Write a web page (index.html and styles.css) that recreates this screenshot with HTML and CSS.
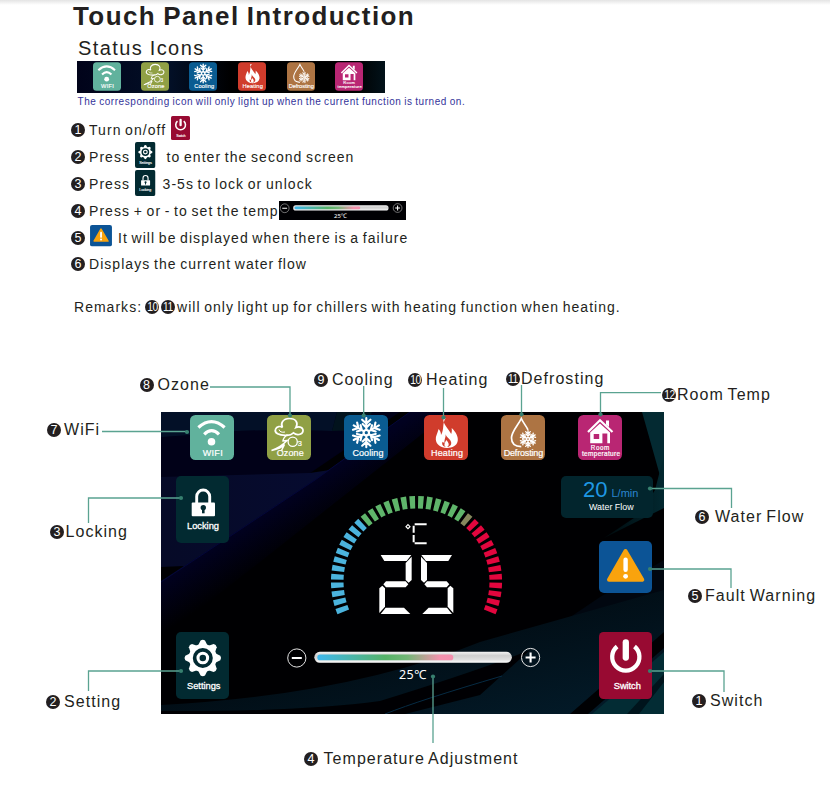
FILE: index.html
```html
<!DOCTYPE html>
<html lang="en">
<head>
<meta charset="utf-8">
<title>Touch Panel Introduction</title>
<link rel="stylesheet" href="styles.css">
</head>
<body>
<svg class="defs" aria-hidden="true">
  <defs>
    <linearGradient id="temp-fill" x1="0" x2="1" y1="0" y2="0">
      <stop offset="0" stop-color="#3fb8ee"/><stop offset=".5" stop-color="#55b368"/><stop offset=".66" stop-color="#72b776"/><stop offset=".9" stop-color="#f492ad"/><stop offset="1" stop-color="#f58fae"/>
    </linearGradient>
    <linearGradient id="track" x1="0" x2="0" y1="0" y2="1">
      <stop offset="0" stop-color="#f4f4f4"/><stop offset=".35" stop-color="#cfcfcf"/><stop offset=".7" stop-color="#dedede"/><stop offset="1" stop-color="#fff"/>
    </linearGradient>
    <g id="flake" fill="none" stroke="#fff" stroke-linecap="round">
      <g id="arm"><path d="M0 -3V-14M-4 -12.5L0 -8.8L4 -12.5M-3.5 -8.4L0 -5L3.5 -8.4"/></g>
      <use href="#arm" transform="rotate(60)"/><use href="#arm" transform="rotate(120)"/><use href="#arm" transform="rotate(180)"/><use href="#arm" transform="rotate(240)"/><use href="#arm" transform="rotate(300)"/>
      <circle r="2.6"/>
    </g>
    <symbol id="wifi" viewBox="0 0 44 45">
      <rect width="44" height="45" rx="5.5" fill="#61b29d"/>
      <g fill="none" stroke="#fff" stroke-width="3.2"><path d="M8.4 12.5Q21.5 .6 34.6 12.5"/><path d="M14.2 19.3Q21.6 12 29 19.3"/></g>
      <circle cx="21.5" cy="26.7" r="3.8" fill="#fff"/>
      <text x="12.7" y="41" textLength="20" class="tile-text">WIFI</text>
    </symbol>
    <symbol id="ozone" viewBox="0 0 44 45">
      <rect width="44" height="45" rx="5.5" fill="#90a045"/>
      <path d="M19 20.300C12 20.500 7 18 8.500 14.300C9.700 11 13.500 11 15.500 12.500C13 8.500 16 3.500 22.300 3.500C29 3.500 31.500 8 29 12.500C33 10.800 36.500 13 36 16.200C35.400 20 29.500 20.700 26.500 17.900C24.500 19.800 22 20.500 19 20.300" fill="none" stroke="#fff" stroke-width="1.700"/>
      <path d="M12 14.500Q13 18 18 17" fill="none" stroke="#fff" stroke-width="1"/>
      <path d="M20.500 19.500Q16 23 16 26L20 25.500Q14 32 4.500 35.500Q14 33.500 17.500 29.500L14.500 35.500" fill="none" stroke="#fff" stroke-width="1.500"/>
      <circle cx="25.700" cy="26.800" r="4.600" fill="none" stroke="#fff" stroke-width="1.300"/>
      <text x="30.700" y="31" font-size="7.500" fill="#fff" stroke="#fff" stroke-width=".2">3</text>
      <text x="9.700" y="40.800" textLength="27" class="tile-text">Ozone</text>
    </symbol>
    <symbol id="cooling" viewBox="0 0 44 45">
      <rect width="44" height="45" rx="5.500" fill="#0a5c91"/>
      <g transform="translate(22.300 17.700) scale(1.040)" stroke-width="2.050"><use href="#flake"/></g>
      <text x="8.400" y="41" textLength="31" class="tile-text">Cooling</text>
    </symbol>
    <symbol id="heating" viewBox="0 0 44 45">
      <rect width="44" height="45" rx="5.500" fill="#d03c2c"/>
      <path d="M19.500 3C18 8 24.500 14 27.200 19C28.200 16 27.700 14.500 27.700 13C32 17 34.500 22 33.700 26C32.700 31 28.500 32.700 23 33C16.500 32.700 12.200 29.500 11.800 24.500C11.500 21 13.500 18.500 14.600 14C16.500 16 17 18 17 20C20.500 14.500 18 9 21.500 3Z" fill="#fff"/>
      <path d="M21.500 19C22 22 27 24.500 27.200 27.500C27.500 30.300 25.400 32 22.700 32C19 32 17.300 29.500 18.600 26.800L20.500 28.300C20 24.500 22.200 22 21.500 19Z" fill="#d03c2c"/>
      <path d="M22.300 25C25.500 28.500 25.500 31 22.500 32.300C19.300 31.300 20.300 28.500 22.300 25Z" fill="#fff"/>
      <text x="7" y="41" textLength="32" class="tile-text">Heating</text>
    </symbol>
    <symbol id="defrosting" viewBox="0 0 44 45">
      <rect width="44" height="45" rx="5.500" fill="#ad7443"/>
      <path d="M20.300 31.700C14 31.500 10.500 28.500 10.500 23C10.500 16.500 17 10.500 20.300 3.500C22 7.500 25.500 11.500 27 14.800" fill="none" stroke="#fff" stroke-width="1.700"/>
      <g transform="translate(27 24) scale(.59)" stroke-width="2.300"><use href="#flake"/></g>
      <text x="2.700" y="40.800" textLength="39.500" class="tile-text">Defrosting</text>
    </symbol>
    <symbol id="room" viewBox="0 0 44 45">
      <rect width="44" height="45" rx="5.500" fill="#b92673"/>
      <path d="M10 17L22 5.200L34.500 17" fill="none" stroke="#fff" stroke-width="2.200"/>
      <path d="M28 5.500H31V12L28 9.500Z" fill="#fff"/>
      <path fill-rule="evenodd" d="M12.200 17.500L22 8.600L32 17.500V28.300H29.300V18.500H24.400V28.300H12.200ZM15.700 19H21.200V24H15.700Z" fill="#fff"/>
      <text x="12.800" y="34.800" textLength="18.500" font-size="6.300" fill="#fff" stroke="#fff" stroke-width=".2">Room</text>
      <text x="4" y="40.800" textLength="38" font-size="6.500" fill="#fff" stroke="#fff" stroke-width=".2">temperature</text>
    </symbol>
    <symbol id="locking" viewBox="0 0 53 67">
      <rect width="53" height="67" rx="5" fill="#022a31"/>
      <path d="M20.700 27V20.500A6.500 6.500 0 0 1 33.700 20.500V27" fill="none" stroke="#fff" stroke-width="2.900"/>
      <rect x="15.700" y="26.500" width="23.300" height="13.700" rx="1" fill="#fff"/>
      <circle cx="27.300" cy="31.700" r="2.700" fill="#022a31"/><path d="M26 32.500H28.600V37.300H26Z" fill="#022a31"/>
      <text x="11" y="53.300" textLength="32" class="card-text">Locking</text>
    </symbol>
    <symbol id="settings" viewBox="0 0 53 67">
      <rect width="53" height="67" rx="5" fill="#022a31"/>
      <g fill="none" stroke="#fff"><circle cx="26.800" cy="26" r="12" stroke-width="4"/><circle cx="26.800" cy="26" r="4.800" stroke-width="3.100"/></g>
      <g fill="#fff" transform="translate(26.800 26)"><path id="tooth" d="M-5 -12L-2.200 -17.500Q0 -19 2.200 -17.500L5 -12Z"/><use href="#tooth" transform="rotate(45)"/><use href="#tooth" transform="rotate(90)"/><use href="#tooth" transform="rotate(135)"/><use href="#tooth" transform="rotate(180)"/><use href="#tooth" transform="rotate(225)"/><use href="#tooth" transform="rotate(270)"/><use href="#tooth" transform="rotate(315)"/></g>
      <text x="11" y="57" textLength="33.500" class="card-text">Settings</text>
    </symbol>
    <symbol id="switch" viewBox="0 0 53 67">
      <rect width="53" height="67" rx="4.500" fill="#980a32"/>
      <path d="M18.100 14.500A13.600 13.600 0 1 0 35.500 14.500" fill="none" stroke="#fff" stroke-width="4.300"/>
      <path d="M26.800 10.500V25.500" stroke="#fff" stroke-width="6.300" stroke-linecap="round"/>
      <text x="14.800" y="57.300" textLength="27" class="card-text">Switch</text>
    </symbol>
    <symbol id="warning" viewBox="0 0 53 52">
      <rect width="53" height="52" rx="5" fill="#0c5496"/>
      <path d="M26.500 10L43.300 38.800H10Z" fill="#f9a30d" stroke="#f9a30d" stroke-width="4" stroke-linejoin="round"/>
      <path d="M26.600 18.800V28.800" stroke="#fff" stroke-width="4.400" stroke-linecap="round"/><circle cx="26.600" cy="35.300" r="2.400" fill="#fff"/>
    </symbol>
    <symbol id="slider" viewBox="284.700 643 263 39.300">
      <g fill="none" stroke="#e4e4e4" stroke-width="1"><circle cx="296.500" cy="658" r="9.100"/><circle cx="530.300" cy="657.500" r="9.100"/></g>
      <path d="M291.500 658H301.500M525.300 657.500H535.300M530.300 652.500V662.500" stroke="#fff" stroke-width="2.100"/>
      <rect x="314" y="651.800" width="197.600" height="11" rx="5.500" fill="url(#track)"/>
      <rect x="317" y="654.500" width="136" height="5.800" rx="2.900" fill="url(#temp-fill)"/>
      <text x="398.700" y="678.800" textLength="27.500" class="slider-text">25℃</text>
    </symbol>
    <g id="two" fill="#fff"><path d="M182 225H274L260 243H193Z"/><path d="M275 230V300L266 308L257 300V249Z"/><path d="M190 313L198 304H257L265 313L257 322H198Z"/><path d="M178 399V325L187 317L195 325V380Z"/><path d="M182 402L197 383H252L271 402Z"/></g>
  </defs>
</svg>

<main class="page">
  <header class="intro">
    <h1>Touch Panel Introduction</h1>
    <h2>Status Icons</h2>
    <div class="strip">
      <svg><use href="#wifi"/></svg><svg><use href="#ozone"/></svg><svg><use href="#cooling"/></svg><svg><use href="#heating"/></svg><svg><use href="#defrosting"/></svg><svg><use href="#room"/></svg>
    </div>
    <p class="note">The corresponding icon will only light up when the current function is turned on.</p>
    <ul class="steps">
      <li><i class="num">1</i><span>Turn on/off</span><svg class="mini mini-switch"><use href="#switch"/></svg></li>
      <li><i class="num">2</i><span>Press</span><svg class="mini mini-settings"><use href="#settings"/></svg><span>to enter the second screen</span></li>
      <li><i class="num">3</i><span>Press</span><svg class="mini mini-lock"><use href="#locking"/></svg><span>3-5s to lock or unlock</span></li>
      <li><i class="num">4</i><span>Press + or - to set the temp</span><svg class="mini-slider"><use href="#slider"/></svg></li>
      <li><i class="num">5</i><svg class="mini-warning"><use href="#warning"/></svg><span>It will be displayed when there is a failure</span></li>
      <li><i class="num">6</i><span>Displays the current water flow</span></li>
    </ul>
    <p class="remarks"><span>Remarks:</span><i class="num wide"><b>10</b></i><i class="num wide"><b>11</b></i><span class="remark-text">will only light up for chillers with heating function when heating.</span></p>
  </header>

  <section class="diagram">
    <div class="panel">
      <svg class="backdrop" viewBox="161 412 503 302" preserveAspectRatio="none">
        <defs>
          <linearGradient id="navy" x1="0" y1="0" x2="1" y2="0"><stop offset="0" stop-color="#060a27"/><stop offset="1" stop-color="#060b30"/></linearGradient>
          <linearGradient id="edge" gradientUnits="userSpaceOnUse" x1="250" y1="522" x2="275" y2="560"><stop offset="0" stop-color="#010120"/><stop offset="1" stop-color="#000002"/></linearGradient>
          <linearGradient id="teal" x1="0" y1="0" x2="1" y2="0"><stop offset="0" stop-color="#00090c"/><stop offset="1" stop-color="#022830"/></linearGradient>
          <linearGradient id="floor" x1="0" y1="0" x2="1" y2="1"><stop offset="0" stop-color="#000103"/><stop offset="1" stop-color="#031c2b"/></linearGradient>
        </defs>
        <rect x="161" y="412" width="503" height="302" fill="#000002"/>
        <path d="M161 412H400L300 480L161 570Z" fill="#010118"/>
        <path d="M161 412H337L332 431Q250 428 205 434L161 437Z" fill="#031027"/>
        <path d="M161 477L310 473L330 470L161 582Z" fill="url(#navy)"/>
        <path d="M161 567L184 566L161 581Z" fill="#000003"/>
        <path d="M161 582L315 480Q365 444 410 412H450L161 640Z" fill="url(#edge)"/>
        <path d="M161 582L315 480Q365 444 410 412" fill="none" stroke="#04073a" stroke-width="1"/>
        <path d="M337 412H372L362 430L332 431Z" fill="#02131d"/>
        <path d="M642 412H664V490Q650 440 642 412Z" fill="#042a32"/>
        <path d="M664 508L604 538L640 514L655 490L664 455Z" fill="url(#teal)"/>
        <path d="M600 597L664 560V640L580 705H440Z" fill="#010710"/>
        <path d="M161 705Q350 695 480 642L664 590V714H161Z" fill="url(#floor)"/>
        <path d="M161 714V711Q300 712 380 701Q480 670 530 650L480 695L405 714Z" fill="#000003"/>
        <path d="M385 714Q420 700 502 676" fill="none" stroke="#062b43" stroke-width="1"/>
        <path d="M570 714L664 632V648L588 714Z" fill="#000103"/>
        <path d="M592 714L664 652V714Z" fill="#032c34"/>
        <path d="M627 714L664 674V682L639 714Z" fill="#00141c"/>
      </svg>
      <div class="status-row">
        <svg><use href="#wifi"/></svg><svg><use href="#ozone"/></svg><svg><use href="#cooling"/></svg><svg><use href="#heating"/></svg><svg><use href="#defrosting"/></svg><svg><use href="#room"/></svg>
      </div>
      <div class="controls">
        <div class="col-left">
          <svg class="card"><use href="#locking"/></svg>
          <svg class="card"><use href="#settings"/></svg>
        </div>
        <div class="col-mid">
          <svg class="gauge" viewBox="328 490 178 130">
            <g transform="translate(416.500 581.500)" fill="none" stroke-width="12.600" stroke-dasharray="5.300 2.971">
              <path d="M79.250 0A79.250 79.250 0 0 1 27.600 74.300" transform="rotate(157.480)" stroke="#4bb3dd"/>
              <path d="M79.250 0A79.250 79.250 0 0 1 19.700 76.800" transform="rotate(229.240)" stroke="#5fb56b"/>
              <path d="M79.250 0A79.250 79.250 0 0 1 79.070 5.300" transform="rotate(306.980)" stroke="#86885d"/>
              <path d="M79.250 0A79.250 79.250 0 0 1 27.600 74.300" transform="rotate(312.960)" stroke="#e2063e"/>
            </g>
            <g transform="translate(320 480) scale(.3333)">
              <use href="#two"/><use href="#two" transform="translate(578 0) scale(-1 1)"/>
              <path d="M284 133H320M281 137V158M281 165V187M284 190H320" fill="none" stroke="#fff" stroke-width="6"/>
              <path d="M264 134L270 140L264 146L258 140Z" fill="none" stroke="#fff" stroke-width="3.500"/>
            </g>
          </svg>
          <svg class="slider"><use href="#slider"/></svg>
        </div>
        <div class="col-right">
          <div class="flow"><p><span class="flow-value">20</span><span class="flow-unit">L/min</span></p><p class="flow-name">Water Flow</p></div>
          <svg class="warn"><use href="#warning"/></svg>
          <svg class="card"><use href="#switch"/></svg>
        </div>
      </div>
    </div>
    <svg class="leads" viewBox="0 340 830 453">
      <g fill="none" stroke="#5aa391" stroke-width="1.300">
        <path d="M102 431.500H187M210 387H290V415.500M363.700 386V415.500M443.500 388V417.500M521.500 385V414M661 392.700H600.500V414M88.500 523V498H181M88.500 691V671H181M650 671H724V692M650 569H731V588M650 488.500H731.500V508M433 676V743"/>
      </g>
      <g fill="#37806f"><circle cx="187" cy="432" r="2.100"/><circle cx="290" cy="415.500" r="2.100"/><circle cx="363.700" cy="415.500" r="2.100"/><circle cx="443.500" cy="417.500" r="2.100"/><circle cx="521.500" cy="414.300" r="2.100"/><circle cx="600.500" cy="414.300" r="2.100"/><circle cx="181" cy="498" r="2.100"/><circle cx="181" cy="671" r="2.100"/><circle cx="650" cy="671" r="2.100"/><circle cx="650" cy="569" r="2.100"/><circle cx="650" cy="488.500" r="2.100"/><circle cx="433" cy="676.500" r="2.100"/></g>
    </svg>
    <div class="label l-ozone"><i class="num">8</i><span>Ozone</span></div>
    <div class="label l-cooling"><i class="num">9</i><span>Cooling</span></div>
    <div class="label l-heating"><i class="num wide"><b>10</b></i><span>Heating</span></div>
    <div class="label l-defrosting"><i class="num wide"><b>11</b></i><span>Defrosting</span></div>
    <div class="label l-room"><i class="num wide"><b>12</b></i><span>Room Temp</span></div>
    <div class="label l-wifi"><i class="num">7</i><span>WiFi</span></div>
    <div class="label l-locking"><i class="num">3</i><span>Locking</span></div>
    <div class="label l-setting"><i class="num">2</i><span>Setting</span></div>
    <div class="label l-flow"><i class="num">6</i><span>Water Flow</span></div>
    <div class="label l-fault"><i class="num">5</i><span>Fault Warning</span></div>
    <div class="label l-switch"><i class="num">1</i><span>Switch</span></div>
    <div class="label l-temp"><i class="num">4</i><span>Temperature Adjustment</span></div>
  </section>
</main>
</body>
</html>
```
FILE: styles.css
```css
* { box-sizing: border-box; }
body { margin: 0; background: #fff; color: #231f20; font-family: "Liberation Sans", Arial, sans-serif; }
h1, h2, p, ul { margin: 0; padding: 0; font-weight: normal; }
svg { display: block; flex: none; }
.defs { position: absolute; width: 0; height: 0; }
.tile-text { font-size: 9px; fill: #fff; stroke: #fff; stroke-width: .2px; }
.card-text { font-size: 9.3px; fill: #fff; stroke: #fff; stroke-width: .3px; }
.slider-text { font-family: "Noto Sans", "Noto Sans CJK SC", sans-serif; font-size: 12.5px; fill: #fff; }

.page { width: 830px; height: 793px; overflow: hidden; background: linear-gradient(#e4e4e4, #fff 5px); }
.intro { height: 340px; padding: 1px 0 0 73px; }
h1 { font-size: 26px; line-height: 30px; font-weight: bold; letter-spacing: 1.4px; word-spacing: -1.500px; white-space: nowrap; }
h2 { margin: 5px 0 0 5px; font-size: 20px; line-height: 25px; letter-spacing: 1.42px; word-spacing: -.5px; }
.strip { display: grid; grid-template-columns: 48.500px 48px 49px 48.500px 48.500px 28px; width: 308px; height: 32px; margin-left: 4px; padding: 1px 0 0 15.500px; background: linear-gradient(90deg, #01031a, #031027 30%, #000 50%, #000 90%, #02121a); }
.strip svg { width: 28px; height: 29px; }
.note { margin: 2px 0 0 4.500px; font-size: 10px; line-height: 14px; letter-spacing: .56px; word-spacing: -.6px; color: #34349a; white-space: nowrap; }

.steps { display: grid; grid-auto-rows: 26.800px; margin: 8px 0 0 -2px; list-style: none; }
.steps li { display: flex; align-items: center; font-size: 14px; letter-spacing: 1.050px; word-spacing: -1.300px; white-space: nowrap; }
.num { display: flex; flex: none; align-items: center; justify-content: center; width: 14px; height: 14px; border-radius: 50%; background: #231f20; color: #fff; font: 12.500px/14px "Liberation Sans", Arial, sans-serif; letter-spacing: 0; }
.wide b { flex: none; font-weight: normal; letter-spacing: -.5px; transform: scaleX(.82); }
.steps .num { margin-right: 4px; }
.mini { width: 20.500px; height: 26px; }
.mini-switch { width: 19px; height: 24px; margin: -4px 0 0 4.500px; }
.mini-settings { margin: -5px 11px 0 5px; }
.mini-lock { margin: -2px 7px 0 5px; }
.mini-slider { width: 127px; height: 19px; margin-left: .5px; background: #000003; }
.mini-warning { width: 22px; height: 21.500px; margin: -3px 6px 0 1px; }
.remarks { display: flex; align-items: center; margin: 16px 0 0 1px; font-size: 14px; line-height: 27px; letter-spacing: 1.020px; word-spacing: -1.300px; white-space: nowrap; }
.remarks .num { margin: 0 0 0 2px; }
.remarks span + .num { margin-left: 3px; }
.remark-text { margin-left: 2px; }

.diagram { position: relative; height: 453px; padding: 72px 0 0 161px; }
.panel { position: relative; width: 503px; height: 302px; overflow: hidden; padding: 3px 11px 16px 15px; }
.backdrop { position: absolute; inset: 0; width: 100%; height: 100%; }
.status-row { position: relative; display: grid; grid-template-columns: 77px 77px 79.500px 77.500px 76.500px 44px; padding-left: 14px; }
.status-row svg { width: 44px; height: 45px; }
.controls { position: relative; display: grid; grid-template-columns: 53px 1fr 92px; height: 223px; margin-top: 15.500px; }
.col-left { display: flex; flex-direction: column; justify-content: space-between; }
.card { width: 53px; height: 67px; }
.col-mid { display: flex; flex-direction: column; align-items: flex-start; }
.gauge { width: 178px; height: 130px; margin: 14.500px 0 0 99px; }
.slider { width: 263px; height: 39.300px; margin: 23px 0 0 55.700px; }
.col-right { display: flex; flex-direction: column; justify-content: space-between; align-items: flex-end; }
.flow { width: 92px; height: 42px; padding-top: 3px; border-radius: 5px; background: #02252d; color: #fff; }
.flow p { display: flex; align-items: baseline; height: 20px; padding-left: 22px; line-height: 22px; }
.flow-value { font-size: 22px; color: #1f98e3; }
.flow-unit { margin-left: 4px; font-size: 11px; color: #2b86cf; }
.flow .flow-name { display: block; height: auto; padding-left: 28px; font-size: 8.900px; line-height: 17px; white-space: nowrap; }
.warn { width: 53px; height: 52px; }
.col-right .card { margin-right: 1px; }
.warn { margin: -1px 1px 14px 0; }

.leads { position: absolute; left: 0; top: 0; width: 830px; height: 453px; }
.label { position: absolute; display: flex; align-items: center; gap: 4px; font-size: 16px; line-height: 22px; letter-spacing: 1.050px; word-spacing: -1.500px; white-space: nowrap; }
.l-ozone { left: 139.500px; top: 34px; }
.l-cooling { left: 314px; top: 28.500px; }
.l-heating { left: 408px; top: 28.500px; }
.l-defrosting { left: 506px; top: 27.500px; gap: 1px; }
.l-room { left: 662px; top: 44px; gap: 1px; }
.l-wifi { left: 47px; top: 78.500px; gap: 3px; }
.l-locking { left: 50px; top: 180.500px; gap: 1.500px; }
.l-setting { left: 46px; top: 351px; }
.l-flow { left: 695px; top: 166px; gap: 6px; }
.l-fault { left: 688px; top: 245px; gap: 3px; }
.l-switch { left: 692px; top: 350px; }
.l-temp { left: 304px; top: 408px; gap: 5.500px; }
```
